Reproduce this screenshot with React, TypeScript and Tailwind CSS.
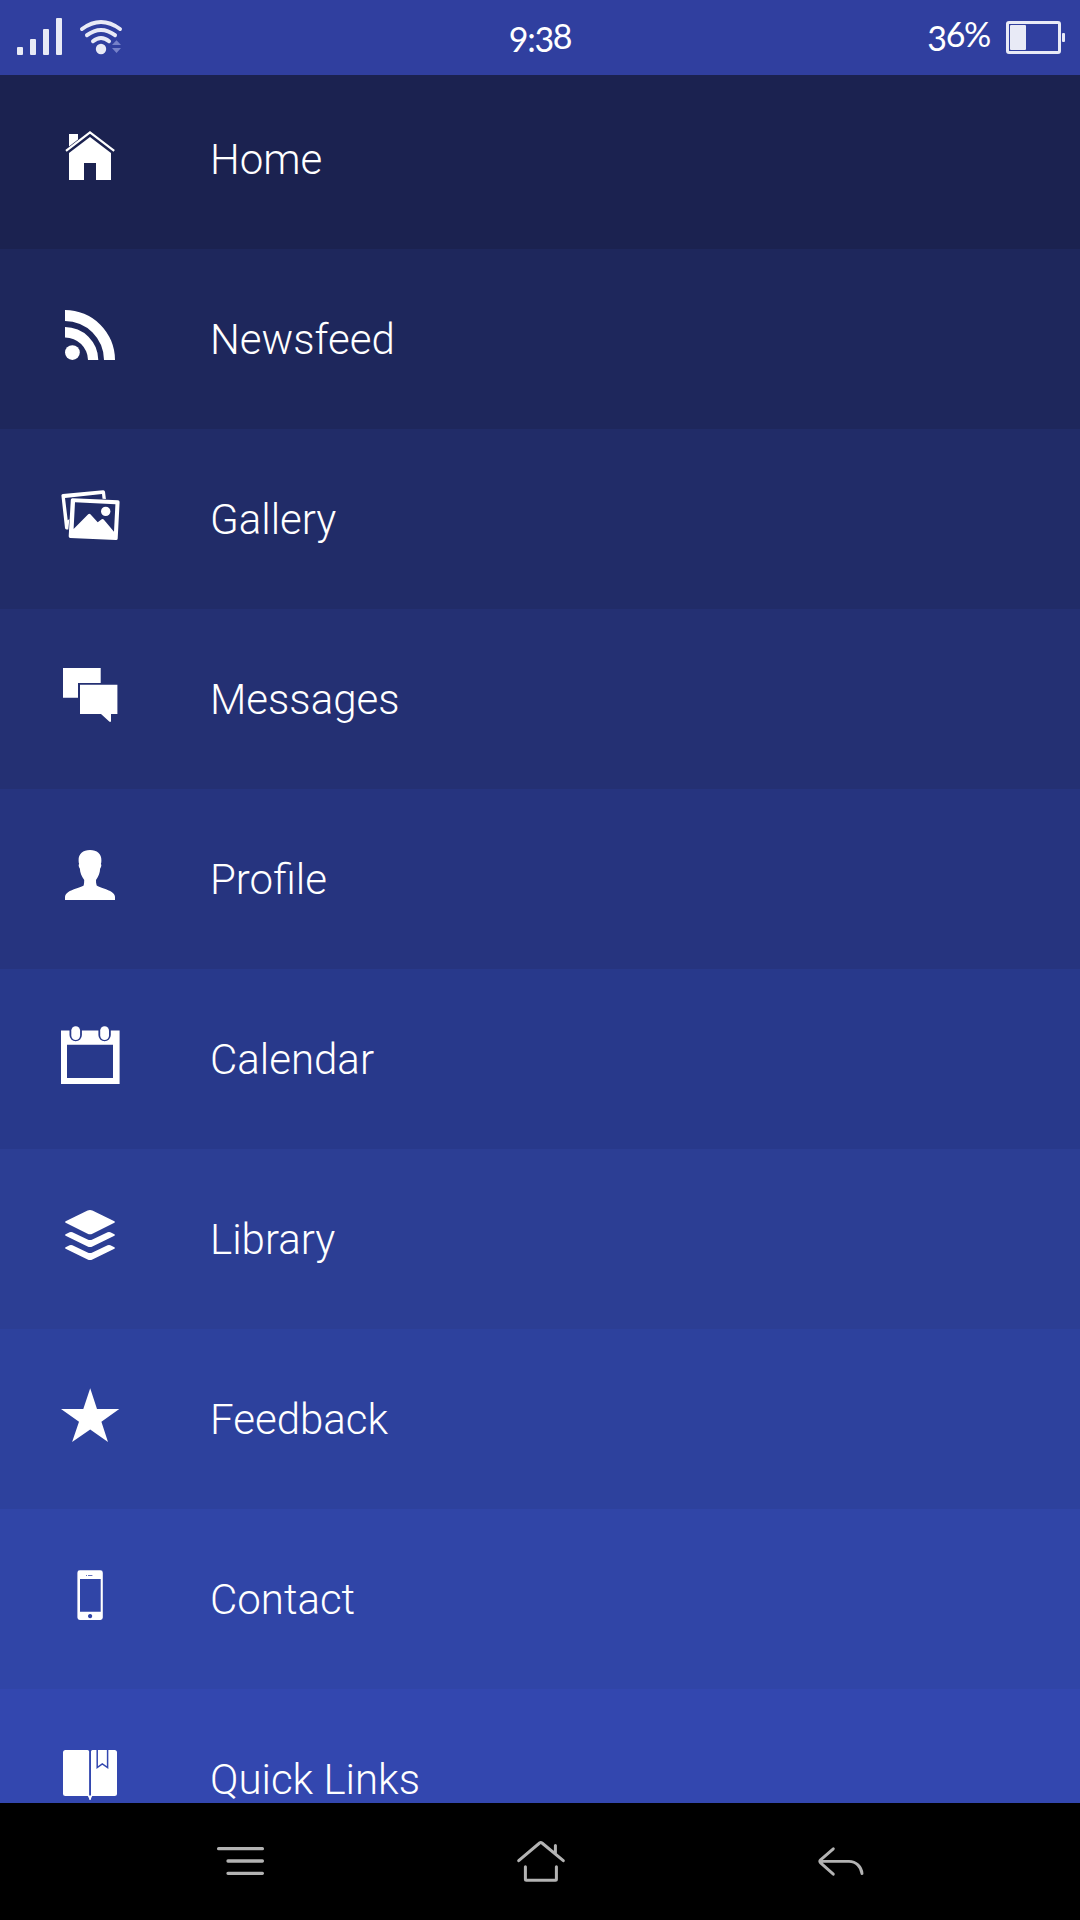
import React from 'react';

const ICONS: Record<string, React.ReactNode> = {
  home: (
    <>
      <path d="M9 9h9v5.6L9 21.6z" />
      <path d="M6 25.8 30 7.4l24.2 18.4" fill="none" stroke="currentColor" strokeWidth="2.2" />
      <path d="M30 12 9 28v27h15V38h12v17h15V28z" />
    </>
  ),
  feed: (
    <>
      <path d="M5 5a50 50 0 0 1 50 50H44A39 39 0 0 0 5 16z" />
      <path d="M5 22a33.3 33.3 0 0 1 33.3 33H28A22.8 22.8 0 0 0 5 32.6z" />
      <circle cx="12.4" cy="47.6" r="7.4" />
    </>
  ),
  gallery: (
    <>
      <path d="M8.3 44.4H6.4A1.6 1.6 0 0 1 5 43L1.4 10.6A1.6 1.6 0 0 1 2.9 9L43 5.2a1.8 1.8 0 0 1 2 1.5l.9 7.3-3.4-.2L42 9.1 5 12.9l2.7 22.4 1.7-1.2z" />
      <path
        fillRule="evenodd"
        d="M12.6 13.2 58 15.3a1.7 1.7 0 0 1 1.6 1.8L57.7 53.4a1.7 1.7 0 0 1-1.8 1.6L10.3 52.9a1.7 1.7 0 0 1-1.6-1.8L10.8 14.8a1.7 1.7 0 0 1 1.8-1.6zM15 17.3l-1.4 26.6L28.2 29.3q1.1-1 2.2 0l7.3 8 4-3q1-.8 2 .2L54 46.7l1.4-27.4z"
      />
      <circle cx="45.7" cy="26.4" r="4.7" />
    </>
  ),
  messages: (
    <>
      <path d="M3 3h37.7v15H18v14.7H3z" />
      <path d="M20 19.7h37.4V49H51v7.7h-1.5L41 49H20z" />
    </>
  ),
  profile: (
    <path d="M30 5C23 5 18.4 8.8 18.6 15.5c0 1.4.2 2.6.5 3.6-.8.5-.5 3 .8 4.7 0 3.6 1.8 8 4.3 11.2 0 2-.1 3.8-.5 5.500C20.500 42.500 12 44.400 8.300 46.900 6 48.500 5 50 5 52v3h50v-3c0-2-1-3.500-3.300-5.100C48 44.400 39.500 42.500 36.700 40.500c-.6-1.700-.8-3.500-.7-5.500C38.500 31.800 40.100 27.400 40.100 23.800c1.300-1.700 1.600-4.200.8-4.700.3-1 .5-2.200.5-3.600C41.600 8.800 37 5 30 5z" />
  ),
  calendar: (
    <>
      <path
        fillRule="evenodd"
        d="M1 5.4h8.5V10a6.2 6.2 0 0 0 12.4 0V5.4h16.500V10a6.2 6.2 0 0 0 12.4 0V5.4h8.800V59H1zM7 19.700V53h46V19.700z"
      />
      <rect x="11.3" y="1.2" width="8.8" height="13.8" rx="4.4" />
      <rect x="40.2" y="1.2" width="8.8" height="13.8" rx="4.4" />
    </>
  ),
  library: (
    <>
      <path d="M27.6 5.4q2.4-1 4.8 0L54.4 16.2q1.2.8 0 1.6L32.4 28.700q-2.4 1-4.8 0L5.6 17.8q-1.2-.8 0-1.6z" />
      <path d="M5.6 29.2l4-1.9q1.4-.6 2.8 0L27.6 34.500q2.4 1 4.8 0L47.6 27.3q1.4-.6 2.8 0l4 1.9q1.2.8 0 1.6L32.4 41.4q-2.4 1-4.8 0L5.6 30.8q-1.2-.8 0-1.6z" />
      <path d="M5.6 42.2l4-1.9q1.4-.6 2.8 0L27.6 47.500q2.4 1 4.8 0L47.6 40.3q1.4-.6 2.8 0l4 1.9q1.2.8 0 1.6L32.4 54.4q-2.4 1-4.8 0L5.6 43.8q-1.2-.8 0-1.6z" />
    </>
  ),
  star: (
    <path d="M30.2 3.3 37 23.9h22.3L41.4 36.7 48 57 30.2 44.4 12.1 57 19 36.7 1 23.9h22.3z" />
  ),
  phone: (
    <path
      fillRule="evenodd"
      d="M19.8 5.3h20.6a2.4 2.4 0 0 1 2.4 2.4v44.9a2.4 2.4 0 0 1-2.4 2.4H19.8a2.4 2.4 0 0 1-2.4-2.4V7.7a2.4 2.4 0 0 1 2.4-2.4zM20 14v32.7h20.7V14zM28 9.9v.9h4.4v-.9zM26 9.9v.9h1v-.9zM30.1 49a2.1 2.1 0 1 0 .01 0z"
    />
  ),
  book: (
    <>
      <path d="M5.5 5H27.5q1.6 0 1.6 1.6V51H5.5Q3 51 3 48.5V7.5Q3 5 5.5 5z" />
      <path d="M32.5 5H54.5Q57 5 57 7.5v41Q57 51 54.5 51H31V6.6Q31 5 32.5 5z" />
      <path d="M27.5 50.5h5l-1.3 2.5-.6 2h-1.1l-.6-2z" />
      <path d="M37.2 4.5V22.5l5.1-3.7 5.3 3.7V4.5" fill="none" stroke="#3347af" strokeWidth="1.5" />
    </>
  ),
};

const MENU_ITEMS = [
  { label: 'Home', icon: 'home', bg: 'bg-[#1b2250]' },
  { label: 'Newsfeed', icon: 'feed', bg: 'bg-[#1e275c]' },
  { label: 'Gallery', icon: 'gallery', bg: 'bg-[#212c68]' },
  { label: 'Messages', icon: 'messages', bg: 'bg-[#243073]' },
  { label: 'Profile', icon: 'profile', bg: 'bg-[#26347f]' },
  { label: 'Calendar', icon: 'calendar', bg: 'bg-[#28398b]' },
  { label: 'Library', icon: 'library', bg: 'bg-[#2c3e94]' },
  { label: 'Feedback', icon: 'star', bg: 'bg-[#2d419d]' },
  { label: 'Contact', icon: 'phone', bg: 'bg-[#3045a7]' },
  { label: 'Quick Links', icon: 'book', bg: 'bg-[#3347af]' },
];

const StatusBar: React.FC = () => (
  <header className="grid h-[75px] shrink-0 grid-cols-3 bg-[#303f9f] font-['Lato','Open_Sans',sans-serif] text-[34px] leading-none tracking-[-1.3px] text-white">
    {/* Signal + wifi */}
    <svg width="130" height="75" viewBox="0 0 130 75" fill="#e8eaf6">
      <rect x="17" y="47" width="6" height="8" rx="1" />
      <rect x="30" y="39" width="6" height="16" rx="1" />
      <rect x="43" y="29" width="6" height="26" rx="1" />
      <rect x="56" y="18" width="6" height="37" rx="1" />
      <g fill="none" stroke="#e8eaf6" strokeWidth="4" strokeLinecap="round">
        <path d="M82 29q19-14 38 0" />
        <path d="M87 35.2q14-10.5 28 0" />
        <path d="M93 41.2q8-6.5 16 0" />
      </g>
      <circle cx="101" cy="49" r="5.2" />
      <path d="M112 45l4.500-4.700L121 45zM112 48h9l-4.500 5z" fill="#7681c9" />
    </svg>

    {/* The 9 and 3 hang below the baseline */}
    <div className="flex items-start justify-center pt-[19px]">
      <span className="inline-block translate-y-[3px]">9:3</span>
      <span className="inline-block">8</span>
    </div>

    <div className="flex items-start justify-end">
      <div className="flex pt-[17px]">
        <span className="inline-block translate-y-[4px]">3</span>
        <span className="inline-block">6%</span>
      </div>
      <svg width="90" height="75" viewBox="0 0 90 75" fill="#e8eaf6">
        <rect x="17.5" y="22.5" width="52" height="30" rx="1.5" fill="none" stroke="#e8eaf6" strokeWidth="3" />
        <rect x="20" y="25" width="16" height="25" rx="1" />
        <rect x="72" y="33" width="3" height="9" rx="1" />
      </svg>
    </div>
  </header>
);

const NavBar: React.FC = () => (
  <nav className="flex h-[117px] shrink-0 justify-center bg-black pt-7 text-[#b3b3b3]">
    <button className="flex w-[300px] justify-center">
      <svg width="60" height="60" viewBox="0 0 60 60" fill="none" stroke="currentColor" strokeWidth="3.3" strokeLinecap="round">
        <path d="M8.6 17.7h43.8M18 30h34.4M18 42.3h34.4" />
      </svg>
    </button>
    <button className="flex w-[300px] justify-center">
      <svg width="60" height="60" viewBox="0 0 60 60" fill="none" stroke="currentColor" strokeWidth="3" strokeLinecap="round" strokeLinejoin="round">
        <path d="M8.7 29.7 29.6 12q1.2-.9 2.4 0l21.3 17.700M45.400 14.400v8.400" />
        <path d="M15.4 35.7v12.6q0 1 1 1h29q1 0 1-1V35.700" />
      </svg>
    </button>
    <button className="flex w-[300px] justify-center">
      <svg width="60" height="60" viewBox="0 0 60 60" fill="none" stroke="currentColor" strokeWidth="2.9" strokeLinecap="round" strokeLinejoin="round">
        <path d="M23.3 17.8 10.6 28.9q-1.5 1.5 0 3l12.7 11.3M11 30.4h28c7 0 12.3 5.3 13 12.2" />
      </svg>
    </button>
  </nav>
);

const App: React.FC = () => {
  return (
    <div className="flex h-[1920px] w-[1080px] flex-col overflow-hidden bg-[#3347af]">
      <StatusBar />
      {/* List is scrolled up slightly, so the first and last rows are clipped */}
      <main className="flex min-h-0 flex-1 flex-col overflow-hidden">
        <ul className="-mt-1.5">
          {MENU_ITEMS.map((item) => (
            <li key={item.label} className={`flex h-[180px] items-start pl-[60px] text-white ${item.bg}`}>
              <svg className="mt-[56px] shrink-0" width="60" height="60" viewBox="0 0 60 60" fill="currentColor">
                {ICONS[item.icon]}
              </svg>
              <span className="ml-[90px] mt-[66px] whitespace-nowrap font-['Roboto',sans-serif] text-[42px] font-light leading-[50px]">
                {item.label}
              </span>
            </li>
          ))}
        </ul>
      </main>
      <NavBar />
    </div>
  );
};

export default App;
